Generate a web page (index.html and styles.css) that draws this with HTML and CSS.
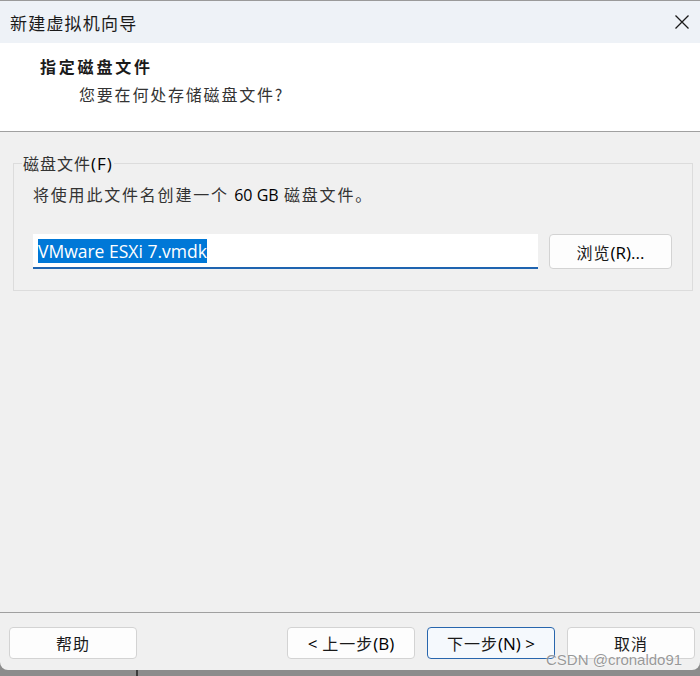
FILE: index.html
```html
<!DOCTYPE html>
<html lang="zh-CN">
<head>
    <meta charset="UTF-8" />
    <title>新建虚拟机向导</title>
    <link rel="stylesheet" href="styles.css">
</head>
<body>
    <div class="topstrip"></div>
    <div class="dialog">
        <div class="titlebar">
            <span class="title">新建虚拟机向导</span>
            <svg class="close" width="16" height="16" viewBox="0 0 16 16">
                <path d="M1.5 1.5 L14.5 14.5 M14.5 1.5 L1.5 14.5" stroke="#1a1a1a" stroke-width="1.3" fill="none" />
            </svg>
        </div>

        <div class="header">
            <div class="step-title">指定磁盘文件</div>
            <div class="step-desc">您要在何处存储磁盘文件?</div>
        </div>

        <div class="content">
            <fieldset class="group">
                <legend>磁盘文件<span class="latin">(F)</span></legend>
                <p class="info">将使用此文件名创建一个 <span class="latin">60 GB</span> 磁盘文件。</p>
                <div class="file-row">
                    <div class="file-input"><span class="selected">VMware ESXi 7.vmdk</span></div>
                    <button class="btn browse">浏览<span class="latin">(R)...</span></button>
                </div>
            </fieldset>
        </div>

        <div class="footer">
            <button class="btn">帮助</button>
            <div class="nav">
                <button class="btn"><span class="latin">&lt;</span> 上一步<span class="latin">(B)</span></button>
                <button class="btn primary">下一步<span class="latin">(N) &gt;</span></button>
                <button class="btn">取消</button>
            </div>
        </div>
    </div>
    <div class="bottomstrip"><div class="divider"></div></div>
    <div class="watermark">CSDN @cronaldo91</div>
</body>
</html>
```

FILE: styles.css
```css
body {
    margin: 0;
    width: 700px;
    height: 676px;
    overflow: hidden;
    position: relative;
    background: #8c8c8c;
    font-family: "Noto Sans CJK SC", sans-serif;
    color: #1a1a1a;
}
.topstrip {
    height: 1px;
    background: #9a9a9a;
}
.dialog {
    height: 669px;
    display: flex;
    flex-direction: column;
    background: #f0f0f0;
    border-radius: 0 0 8px 8px;
}
.latin {
    font-family: "Open Sans", "Noto Sans", sans-serif;
    font-size: 17px;
    color: #000;
}

/* title bar */
.titlebar {
    height: 42px;
    background: #eef2f7;
    display: flex;
    align-items: center;
    justify-content: space-between;
    padding: 0 10px;
}
.title {
    font-size: 17px;
    letter-spacing: 1.2px;
}

/* header */
.header {
    height: 88px;
    background: #fff;
    border-bottom: 1px solid #a0a0a0;
    padding-left: 40px;
}
.step-title {
    font-size: 16px;
    font-weight: bold;
    letter-spacing: 2.8px;
    margin-top: 11px;
    line-height: 24px;
}
.step-desc {
    font-size: 16px;
    letter-spacing: 1.8px;
    color: #333;
    margin-left: 39px;
    margin-top: 4px;
    line-height: 24px;
}

/* content */
.content {
    flex: 1;
    padding: 19px 8px 0 13px;
}
.group {
    margin: 0;
    border: 1px solid #dcdcdc;
    padding: 0 20px 21px 19px;
    width: 639px;
}
.group legend {
    font-size: 16px;
    letter-spacing: 1px;
    color: #333;
    padding: 0 1px;
    margin-left: -11px;
}
.info {
    margin: 7px 0 28px;
    font-size: 16px;
    letter-spacing: 1.8px;
    color: #333;
}
.info .latin {
    letter-spacing: 0;
    font-size: 16px;
}
.file-row {
    display: flex;
    gap: 11px;
    align-items: flex-start;
}
.file-input {
    width: 500px;
    height: 33px;
    background: #fff;
    border-bottom: 2px solid #1f64b0;
    display: flex;
    align-items: center;
    padding-left: 5px;
    font-family: "Open Sans", "Noto Sans", sans-serif;
    font-size: 17.5px;
}
.selected {
    background: #0078d7;
    color: #fff;
    line-height: 24px;
}

/* buttons */
.btn {
    width: 128px;
    height: 32px;
    background: #fdfdfd;
    border: 1px solid #d3d3d3;
    border-radius: 4px;
    font-family: "Noto Sans CJK SC", sans-serif;
    font-size: 16px;
    color: #1a1a1a;
    letter-spacing: 1px;
    padding: 0;
}
.btn .latin {
    letter-spacing: 0;
}
.browse {
    width: 123px;
    height: 35px;
}
.primary {
    background: #f5f9fd;
    border-color: #2866ad;
}

/* footer */
.footer {
    height: 58px;
    border-top: 1px solid #a0a0a0;
    display: flex;
    justify-content: space-between;
    padding: 14px 5px 0 9px;
    box-sizing: border-box;
}
.nav {
    display: flex;
    gap: 12px;
}

.bottomstrip {
    height: 6px;
}
.divider {
    width: 2px;
    height: 6px;
    margin-left: 136px;
    background: #3c3c3c;
}
.watermark {
    position: absolute;
    left: 546px;
    top: 651px;
    font-family: "Liberation Sans", sans-serif;
    font-size: 15px;
    color: rgba(120, 120, 120, 0.75);
    text-shadow: 0 0 2px #fff;
}
```
